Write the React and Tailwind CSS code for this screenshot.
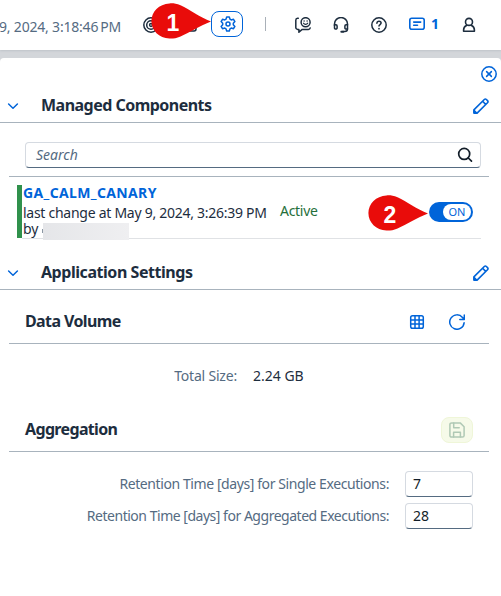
import React from "react";

function Svg({ className = "", children, sw = 1.5, size = 16 }) {
  return (
    <svg
      width={size}
      height={size}
      viewBox="0 0 16 16"
      fill="none"
      stroke="currentColor"
      strokeWidth={sw}
      strokeLinecap="round"
      strokeLinejoin="round"
      className={"block shrink-0 " + className}
    >
      {children}
    </svg>
  );
}

const Target = () => (
  <Svg>
    <circle cx="8" cy="8" r="7.2" />
    <circle cx="8" cy="8" r="4.3" />
    <circle cx="8" cy="8" r="1.4" />
  </Svg>
);
const Gear = () => (
  <Svg sw={1.5}>
    <path d="M6.700.9h2.600l.7 2.300 1.200.7 2.300-.6 1.400 2.300L13.300 7.300v1.400l1.600 1.700-1.400 2.300-2.300-.6-1.200.7-.7 2.300H6.700L6 12.800l-1.200-.7-2.300.6-1.400-2.300 1.600-1.700V7.300L1.100 5.600l1.400-2.300 2.300.6L6 3.200z" />
    <circle cx="8" cy="8" r="2" />
  </Svg>
);
const Feedback = () => (
  <Svg sw={1.5}>
    <path d="M3.300 1.300H2.600A1.900 1.900 0 0 0 .8 3.200v7.300a1.900 1.900 0 0 0 1.900 1.900h1.200v2.900l3.300-2.900h6.200a1.900 1.900 0 0 0 1.800-1.500" />
    <circle cx="10.600" cy="5.200" r="4.500" />
    <path d="M8.500 6.200c.9 1.500 3.300 1.500 4.200 0" strokeWidth="1.200" />
    <path d="M9.100 3.900v.2M12.100 3.900v.2" />
  </Svg>
);
const Headset = () => (
  <Svg>
    <path d="M1.500 8.500V7a6.400 6.400 0 0 1 13 0v4.700c0 1.800-1 2.800-2.800 2.800H9.800" />
    <path d="M1.500 7.800h1.400a1.200 1.200 0 0 1 1.200 1.200v1.900a1.200 1.200 0 0 1-1.200 1.200H2.700a1.200 1.200 0 0 1-1.200-1.200zM14.500 7.800h-1.400a1.200 1.200 0 0 0-1.200 1.200v1.900a1.200 1.200 0 0 0 1.200 1.200h1.400" />
    <path d="M8.300 14.800h2" strokeWidth="1.900" />
  </Svg>
);
const Help = () => (
  <Svg>
    <circle cx="8" cy="8" r="7.200" />
    <path d="M5.900 6.200c.1-1.200 1-1.900 2.100-1.900s2.100.8 2.100 1.800c0 1.400-2.100 1.500-2.100 3" />
    <path d="M8 11.600v.1" strokeWidth="1.700" />
  </Svg>
);
const Notice = () => (
  <Svg sw={1.6}>
    <rect x=".8" y="2.300" width="14.400" height="11" rx="2" />
    <path d="M4.700 6.100h7M4.700 9.300h3.800" />
  </Svg>
);
const Person = () => (
  <Svg sw={1.600}>
    <circle cx="8" cy="4.900" r="3.500" />
    <path d="M5.500 8.600c-1.900.8-2.900 2.300-2.900 4.400v1.300h10.800V13c0-2.100-1-3.600-2.900-4.400" />
  </Svg>
);
const Pencil = () => (
  <Svg sw={1.600}>
    <path d="M.9 15.100v-3.200L11.300 1.500a1.500 1.500 0 0 1 2.100 0l1.100 1.100a1.500 1.500 0 0 1 0 2.100L4.100 15.100zM9.600 3.300l3.100 3.100" />
    <path d="M1.200 12.600l2.200 2.200H1.200z" fill="currentColor" />
  </Svg>
);
const Chevron = () => (
  <Svg className="text-[#0064d9]">
    <path d="M3.600 6l4.400 4.200L12.400 6" />
  </Svg>
);
const Grid = () => (
  <Svg sw={1.500}>
    <rect x="1.700" y="1.700" width="12.600" height="12.600" rx="1.800" />
    <path d="M6 1.700v12.600M10.100 1.700v12.600M1.700 6h12.600M1.700 10.100h12.600" />
  </Svg>
);
const Refresh = () => (
  <Svg>
    <path d="M15.100 8.800A7.200 7.200 0 1 1 13.500 3.500L15.300 5.400M15.300 1v4.500h-4.500" />
  </Svg>
);
const Save = () => (
  <Svg>
    <path d="M2.600.9h8.600l3.900 3.900v8.600a1.700 1.700 0 0 1-1.700 1.700H2.600A1.700 1.700 0 0 1 .9 13.400V2.600A1.700 1.700 0 0 1 2.600.9z" />
    <path d="M4.700 1v4.800h5.500M4.600 15v-4.800h6.800V15" />
  </Svg>
);

function Pin({ label, className }) {
  return (
    <div className={"absolute h-[36px] w-[60px] " + className}>
      <svg width="60" height="36" viewBox="0 0 60 36" className="absolute inset-0">
        <path d="M60 18.500C49 14.500 39 6.500 29.500 2.300C25 .3 21.500.2 18.500.4C8 1 .4 8.500.4 18S8 35 18.500 35.600C22 35.700 25 35.500 29.500 33.500C39 29.500 49 22.500 60 18.500z" fill="#e90c0a" />
      </svg>
      <span className="absolute left-[1px] top-[2px] flex h-[36px] w-[42px] items-center justify-center font-['Liberation_Sans',sans-serif] text-[23px] font-bold text-white">
        {label}
      </span>
    </div>
  );
}

function SectionHeader({ title, titleClass }) {
  return (
    <div className="flex h-[34px] items-center border-b border-[#a8b3bd] pl-[5px] pr-[12px]">
      <Chevron />
      <h2 className={"mb-[2px] ml-[20px] flex-1 text-[16px] font-bold leading-[20px] " + titleClass}>{title}</h2>
      <button className="text-[#0064d9]"><Pencil /></button>
    </div>
  );
}

function Field({ label, value, labelClass }) {
  return (
    <div className="flex h-[26px] items-center justify-end gap-4 pr-[28px]">
      <label className={"mb-[2px] whitespace-nowrap text-[14px] text-[#556b82] " + labelClass}>{label}</label>
      <div className="flex h-[26px] w-[68px] items-center rounded-[4px] border border-[#d5dae1] border-b-[#556b81] bg-white pb-px pl-[7px] text-[14px] text-[#131e29]">
        {value}
      </div>
    </div>
  );
}

export default function App() {
  return (
    <div className="relative h-[596px] w-[501px] overflow-hidden bg-[#d3d6da] font-['Noto_Sans',sans-serif] text-[#1d2d3e]">
      <header className="flex h-[50px] items-center bg-white shadow-[0_1px_2px_#bfc3c9]">
        <div className="flex w-[121px] shrink-0 justify-end whitespace-nowrap text-[14px] tracking-[-0.2px] text-[#556b82]">
          <span className="mt-[2px]">9, 2024, 3:18:46<span className="ml-[2px]">PM</span></span>
        </div>
        <div className="ml-[22px] w-[16px]"><Target /></div>
        <Svg className="ml-[22px]"><rect x="1" y="2" width="14" height="12" rx="2" /></Svg>
        <button className="ml-[14px] mt-[-2px] flex h-[26px] w-[32px] items-center justify-center rounded-[8px] border border-[#0064d9] pl-px text-[#0064d9]">
          <Gear />
        </button>
        <span className="ml-[22px] mt-[-2px] h-[14px] w-px bg-[#a9b0b8]" />
        <div className="ml-[29px]"><Feedback /></div>
        <div className="ml-[22px]"><Headset /></div>
        <div className="ml-[22px]"><Help /></div>
        <div className="ml-[22px] mt-[-2px] flex items-center text-[#0064d9]">
          <Notice />
          <span className="mb-px ml-[6px] w-[8px] text-[14px] font-bold">1</span>
        </div>
        <div className="ml-[22px]"><Person /></div>
      </header>

      <main className="mt-[8px] h-[538px] rounded-t-[4px] bg-white">
        <div className="flex h-[31px] justify-end pr-[4px] pt-[8px] text-[#0064d9]">
          <Svg><circle cx="8" cy="8" r="7.200" /><path d="M5.600 5.600l4.800 4.800M10.400 5.600l-4.800 4.800" /></Svg>
        </div>

        <SectionHeader title="Managed Components" titleClass="tracking-[-0.52px]" />
        <div className="ml-[9px] mr-[12px] border-b border-[#a8b3bd] pb-2 pt-[19px]">
          <div className="ml-4 mr-2 flex h-[26px] items-center justify-between rounded-[4px] border border-[#d5dae1] border-b-[#556b81] pl-[10px] pr-[7px]">
            <span className="mb-[2px] text-[14px] italic text-[#556b82]">Search</span>
            <Svg className="text-[#131e29]" sw={1.700}>
              <circle cx="7.200" cy="6.900" r="5.500" /><path d="M11.300 11l3.200 3.200" />
            </Svg>
          </div>
        </div>

        <div className="ml-[17px] mr-[20px] mt-[8px] flex h-[54px]">
          <div className="h-[53px] w-[5px] bg-[#30914c]" />
          <div className="flex flex-1 border-b border-[#e0e2e5] pl-px">
            <div className="w-[257px] whitespace-nowrap text-[14px]">
              <div className="h-[20px] font-bold leading-[16px] tracking-[0.36px] text-[#0064d9]">GA_CALM_CANARY</div>
              <div className="h-[16px] leading-[16px] tracking-[-0.27px]">last change at May 9, 2024, 3:26:39 PM</div>
              <div className="flex h-[18px] leading-[16px]">
                <span className="w-[19px]">by</span>
                <span className="mt-[8px] h-[4px] w-px bg-[#8b97a3]" />
                <span className="mt-[2px] h-[17px] w-[86px] bg-linear-to-r from-[#e5e6e9] to-[#efeff1]" />
              </div>
            </div>
            <div className="mt-[16px] w-[149px] text-[14px] leading-[20px] tracking-[-0.3px] text-[#256f3a]">Active</div>
            <div className="mt-[17px] flex h-[20px] w-[44px] shrink-0 items-center justify-end rounded-full bg-[#0064d9] pr-[2px]">
              <span className="flex h-[16px] w-[28px] items-center justify-center rounded-full bg-white text-[11px] text-[#0064d9]">ON</span>
            </div>
          </div>
        </div>

        <div className="mt-[17px]">
          <SectionHeader title="Application Settings" titleClass="tracking-[-0.45px]" />
        </div>

        <div className="ml-[9px] mr-[12px] flex h-[54px] items-center border-b border-[#a8b3bd] pl-4 pr-[24px]">
          <h3 className="mb-[-8px] flex-1 text-[16px] font-bold tracking-[-0.6px]">Data Volume</h3>
          <div className="mt-[11px] flex gap-6 text-[#0064d9]"><Grid /><Refresh /></div>
        </div>

        <div className="mt-[21px] flex h-[20px] items-center text-[14px]">
          <span className="w-[237px] text-right tracking-[-0.2px] text-[#556b82]">Total Size:</span>
          <span className="ml-4">2.24 GB</span>
        </div>

        <div className="ml-[9px] mr-[12px] mt-[23px] flex h-[44px] items-center border-b border-[#a8b3bd] pl-4 pr-[16px]">
          <h3 className="mb-[2px] flex-1 text-[16px] font-bold tracking-[-0.65px]">Aggregation</h3>
          <button className="flex h-[26px] w-[32px] items-center justify-center rounded-[8px] border border-[#eff6d8] bg-[#f6fae9] text-[#b0c9b5]"><Save /></button>
        </div>

        <div className="mt-[19px] flex flex-col gap-[6px]">
          <Field label="Retention Time [days] for Single Executions:" value="7" labelClass="tracking-[-0.41px]" />
          <Field label="Retention Time [days] for Aggregated Executions:" value="28" labelClass="tracking-[-0.48px]" />
        </div>
      </main>

      <Pin label="1" className="left-[151px] top-[3px]" />
      <Pin label="2" className="left-[368px] top-[195px]" />
    </div>
  );
}
